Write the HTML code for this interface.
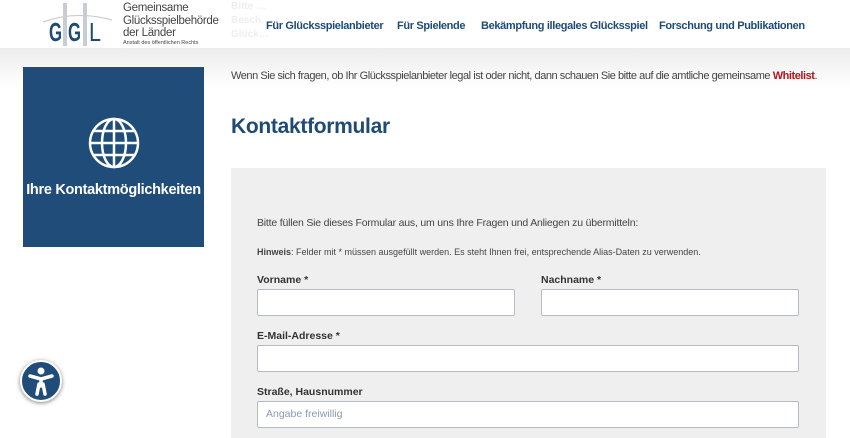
<!DOCTYPE html>
<html><head><meta charset="utf-8"><style>
*{box-sizing:border-box;margin:0;padding:0}
body{width:850px;height:427px;overflow:hidden;background:#fff;font-family:"Liberation Sans",Arial,sans-serif;position:relative;color:#333}
.hdr{position:absolute;left:0;top:0;width:850px;height:48px;background:#fff;z-index:2}
.band{position:absolute;left:0;top:48px;width:850px;height:40px;background:linear-gradient(#ececec,#fff)}
.nav{position:absolute;top:20px;font-size:11px;letter-spacing:-0.35px;font-weight:bold;color:#1d4b76;white-space:nowrap}
.ghost{position:absolute;left:231px;top:0;font-size:10px;font-weight:bold;color:#eee;line-height:14px}
.logo-t{position:absolute;left:123px;top:2px;font-size:11.5px;letter-spacing:-0.3px;line-height:12.5px;color:#444}
.logo-s{position:absolute;left:123px;top:40px;font-size:5.5px;color:#444}
.side{position:absolute;left:23px;top:67px;width:181px;height:180px;background:#1f4c78}
.side .t{position:absolute;left:0;width:181px;top:115px;text-align:center;color:#fff;font-weight:bold;font-size:14.5px;letter-spacing:-0.3px}
.intro{position:absolute;left:231px;top:70px;font-size:11px;color:#444;white-space:nowrap;letter-spacing:-0.45px}
.intro b{color:#b0161a}
h1{position:absolute;left:231px;top:115px;font-size:21px;font-weight:bold;color:#1d4b76;letter-spacing:-0.3px}
.form{position:absolute;left:231px;top:168px;width:595px;height:270px;background:#efefef}
.p1{position:absolute;left:26px;top:49px;font-size:10.5px;color:#444;white-space:nowrap;letter-spacing:-0.2px}
.p2{position:absolute;left:26px;top:79px;font-size:9px;color:#444;white-space:nowrap}
.lab{position:absolute;font-size:10.5px;font-weight:bold;color:#333;white-space:nowrap}
.inp{position:absolute;background:#fff;border:1px solid #b6bcc4;border-radius:2px;height:27px}
.ph{position:absolute;left:8px;top:6px;font-size:10.5px;color:#8a9bb0}
.acc{position:absolute;left:20px;top:360px;width:42px;height:42px;border-radius:50%;background:#1f4c78;border:2px solid #fff;box-shadow:0 1px 4px rgba(0,0,0,.5)}
</style></head><body>
<div class="band"></div>
<div class="hdr">
<div class="ghost">Bitte …<br>Besch…<br>Glück…</div>
<svg style="position:absolute;left:40px;top:0" width="80" height="48" viewBox="0 0 80 48">
<g fill="#c9ccd2"><rect x="23" y="3" width="4" height="43"/><rect x="43" y="3" width="4" height="43"/></g>
<path d="M3 22 Q36 10 72 20" stroke="#c9ccd2" stroke-width="1.2" fill="none"/>
<text x="9" y="41" font-family="Liberation Sans" font-weight="bold" font-size="26" fill="#1d4b76" textLength="13" lengthAdjust="spacingAndGlyphs">G</text>
<text x="28" y="41" font-family="Liberation Sans" font-weight="bold" font-size="26" fill="#1d4b76" textLength="13" lengthAdjust="spacingAndGlyphs">G</text>
<text x="49" y="41" font-family="Liberation Sans" font-size="26" fill="#1d4b76" textLength="12" lengthAdjust="spacingAndGlyphs">L</text>
</svg>
<div class="logo-t">Gemeinsame<br>Glücksspielbehörde<br>der Länder</div>
<div class="logo-s">Anstalt des öffentlichen Rechts</div>
<div class="nav" style="left:266px">Für Glücksspielanbieter</div>
<div class="nav" style="left:397px">Für Spielende</div>
<div class="nav" style="left:481px">Bekämpfung illegales Glücksspiel</div>
<div class="nav" style="left:659px">Forschung und Publikationen</div>
</div>
<div class="side">
<svg style="position:absolute;left:64px;top:49px" width="54" height="54" viewBox="0 0 54 54" fill="none" stroke="#fff" stroke-width="2.5">
<circle cx="27" cy="27" r="24"/><ellipse cx="27" cy="27" rx="12" ry="24"/>
<line x1="27" y1="3" x2="27" y2="51"/><line x1="3" y1="27" x2="51" y2="27"/>
<path d="M7 15 H47 M7 39 H47"/>
</svg>
<div class="t">Ihre Kontaktmöglichkeiten</div>
</div>
<div class="intro">Wenn Sie sich fragen, ob Ihr Glücksspielanbieter legal ist oder nicht, dann schauen Sie bitte auf die amtliche gemeinsame <b>Whitelist</b>.</div>
<h1>Kontaktformular</h1>
<div class="form">
<div class="p1">Bitte füllen Sie dieses Formular aus, um uns Ihre Fragen und Anliegen zu übermitteln:</div>
<div class="p2"><b>Hinweis</b>: Felder mit * müssen ausgefüllt werden. Es steht Ihnen frei, entsprechende Alias-Daten zu verwenden.</div>
<div class="lab" style="left:26px;top:106px">Vorname *</div>
<div class="inp" style="left:26px;top:121px;width:258px"></div>
<div class="lab" style="left:310px;top:106px">Nachname *</div>
<div class="inp" style="left:310px;top:121px;width:258px"></div>
<div class="lab" style="left:26px;top:162px">E-Mail-Adresse *</div>
<div class="inp" style="left:26px;top:177px;width:542px"></div>
<div class="lab" style="left:26px;top:218px">Straße, Hausnummer</div>
<div class="inp" style="left:26px;top:233px;width:542px"><div class="ph">Angabe freiwillig</div></div>
</div>
<div class="acc"><svg width="38" height="38" viewBox="0 0 38 38"><circle cx="19" cy="9" r="3.5" fill="#fff"/><path d="M8 14 L19 17 L30 14 M19 17 V24 M15 32 L17 22 H21 L23 32" stroke="#fff" stroke-width="3.5" fill="none" stroke-linecap="round" stroke-linejoin="round"/></svg></div>
</body></html>
